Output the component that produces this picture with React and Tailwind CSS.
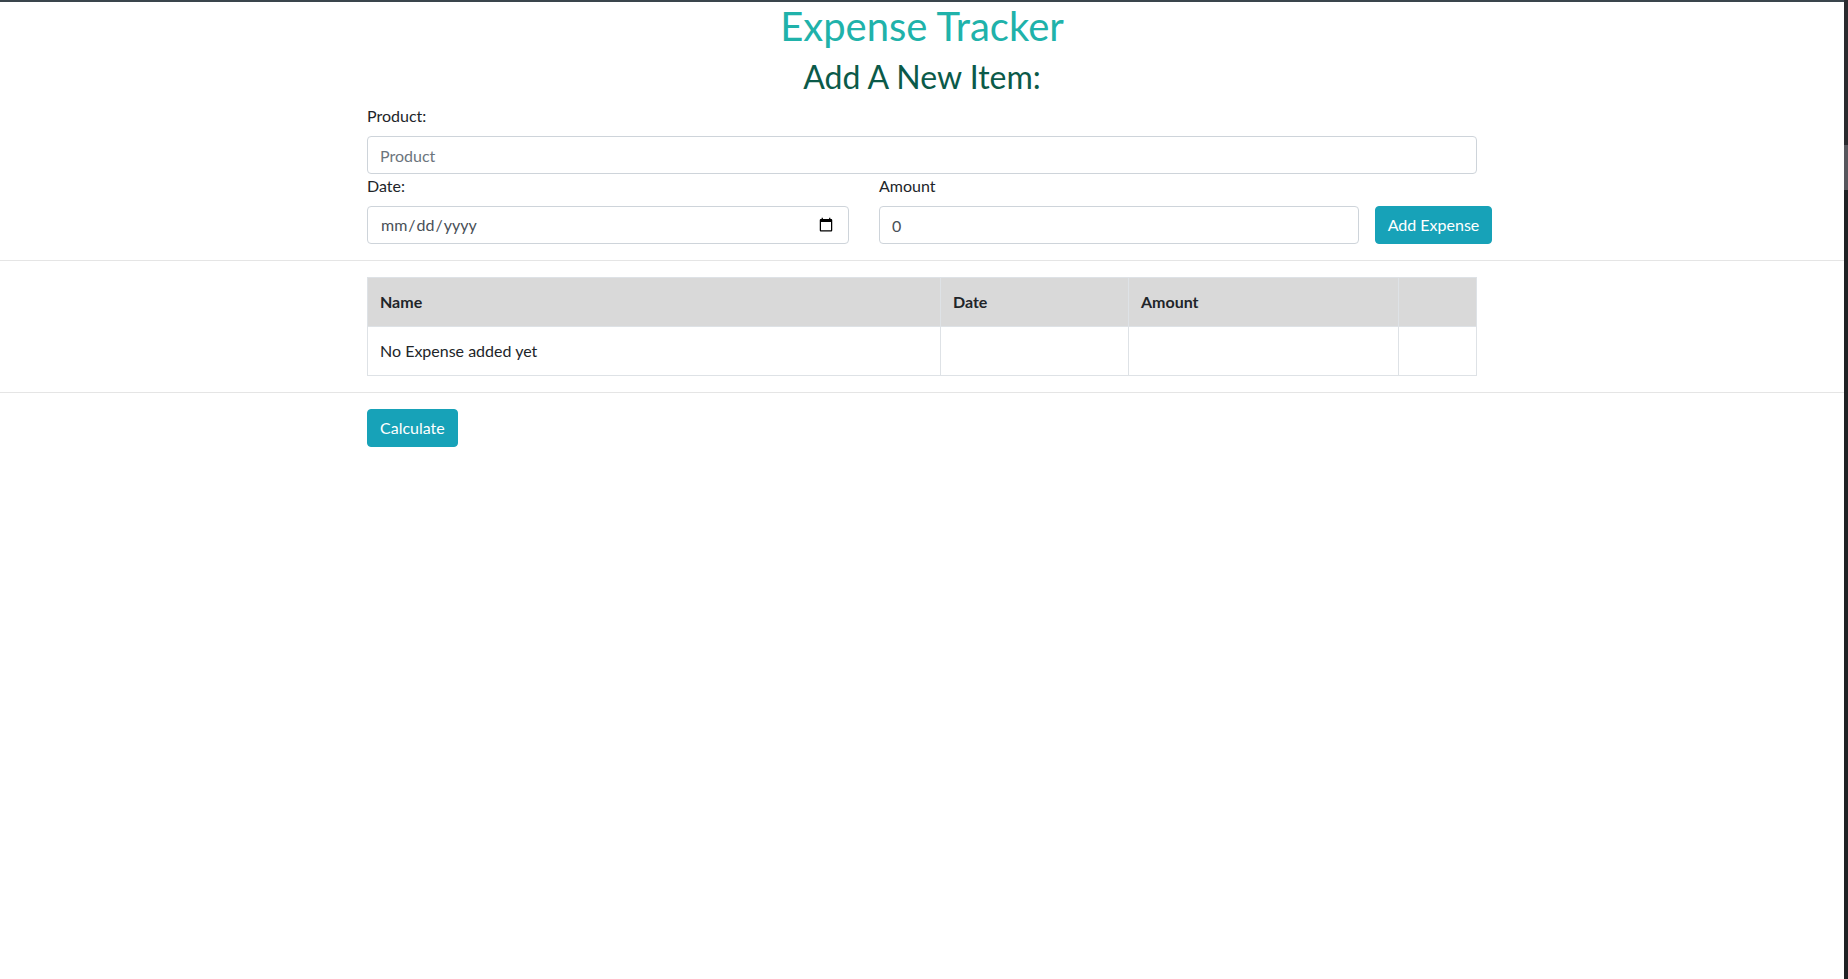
import { useState } from "react";

export default function App() {
  const [product, setProduct] = useState("");
  const [date, setDate] = useState("");
  const [amount, setAmount] = useState(0);
  const [expenses, setExpenses] = useState([]);

  const addExpense = () => {
    if (!product) return;
    setExpenses([...expenses, { name: product, date, amount }]);
    setProduct("");
    setDate("");
    setAmount(0);
  };

  return (
    <div className="flex min-h-[979px] bg-white font-['Lato',sans-serif] text-[16px] leading-6 text-[#212529]">
      <div className="flex-1 border-t-2 border-[#3a454c]">
        {/* Headings */}
        <h1 className="mb-2 text-center text-[40px] font-normal leading-[48px] text-[#20b2aa]">
          Expense Tracker
        </h1>
        <h2 className="mb-2 text-center text-[32px] font-normal leading-[38.4px] text-[#0b5a49]">
          Add A New Item:
        </h2>

        {/* Form */}
        <div className="mx-auto w-[1140px] px-[15px]">
          <label className="mb-2 block">Product:</label>
          <input
            type="text"
            placeholder="Product"
            value={product}
            onChange={(e) => setProduct(e.target.value)}
            className="block h-[38px] w-full rounded border border-[#ced4da] px-3 py-1.5 text-[#495057] placeholder:text-[#6c757d] focus:outline-none"
          />
          <div className="flex items-end">
            <div className="w-[482px] shrink-0">
              <label className="mb-2 block">Date:</label>
              <input
                type="date"
                value={date}
                onChange={(e) => setDate(e.target.value)}
                className="block h-[38px] w-full rounded border border-[#ced4da] px-3 py-1.5 text-[#495057] focus:outline-none"
              />
            </div>
            <div className="ml-[30px] w-[480px] shrink-0">
              <label className="mb-2 block">Amount</label>
              <input
                type="number"
                value={amount}
                onChange={(e) => setAmount(e.target.value)}
                className="block h-[38px] w-full appearance-none rounded border border-[#ced4da] px-3 py-1.5 text-[#495057] focus:outline-none [&::-webkit-inner-spin-button]:appearance-none"
              />
            </div>
            <button
              onClick={addExpense}
              className="ml-4 h-[38px] w-[117px] shrink-0 whitespace-nowrap rounded border border-[#17a2b8] bg-[#17a2b8] px-2 py-1.5 text-white"
            >
              Add Expense
            </button>
          </div>
        </div>

        <hr className="mb-4 mt-4 border-t border-[#e5e5e5]" />

        {/* Expenses table */}
        <div className="mx-auto w-[1140px] px-[15px]">
          <table className="mb-4 w-full table-fixed border-collapse border border-[#dee2e6]">
            <colgroup>
              <col className="w-[573px]" />
              <col className="w-[188px]" />
              <col className="w-[270px]" />
              <col />
            </colgroup>
            <thead>
              <tr className="bg-[#d9d9d9]">
                <th className="border border-[#dee2e6] p-3 text-left font-bold">Name</th>
                <th className="border border-[#dee2e6] p-3 text-left font-bold">Date</th>
                <th className="border border-[#dee2e6] p-3 text-left font-bold">Amount</th>
                <th className="border border-[#dee2e6] p-3"></th>
              </tr>
            </thead>
            <tbody>
              {expenses.length === 0 ? (
                <tr>
                  <td className="border border-[#dee2e6] p-3">No Expense added yet</td>
                  <td className="border border-[#dee2e6] p-3"></td>
                  <td className="border border-[#dee2e6] p-3"></td>
                  <td className="border border-[#dee2e6] p-3"></td>
                </tr>
              ) : (
                expenses.map((item, i) => (
                  <tr key={i}>
                    <td className="border border-[#dee2e6] p-3">{item.name}</td>
                    <td className="border border-[#dee2e6] p-3">{item.date}</td>
                    <td className="border border-[#dee2e6] p-3">{item.amount}</td>
                    <td className="border border-[#dee2e6] p-3"></td>
                  </tr>
                ))
              )}
            </tbody>
          </table>
        </div>

        <hr className="mb-4 border-t border-[#e5e5e5]" />

        <div className="mx-auto w-[1140px] px-[15px]">
          <button className="h-[38px] rounded border border-[#17a2b8] bg-[#17a2b8] px-3 py-1.5 text-white">
            Calculate
          </button>
        </div>
      </div>

      {/* window edge / scrollbar */}
      <div className="flex w-[4px] flex-col bg-[#202124]">
        <div className="h-[145px] bg-[#2a2a2e]" />
        <div className="h-[45px] bg-[#56565c]" />
      </div>
    </div>
  );
}
